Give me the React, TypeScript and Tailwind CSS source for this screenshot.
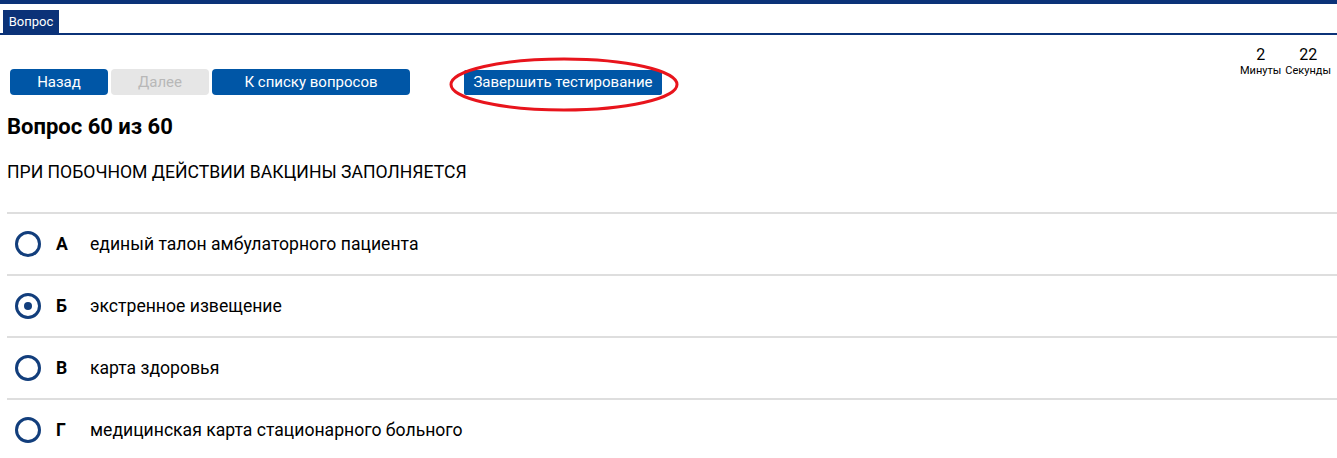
const answers = [
  { key: "А", text: "единый талон амбулаторного пациента", checked: false },
  { key: "Б", text: "экстренное извещение", checked: true },
  { key: "В", text: "карта здоровья", checked: false },
  { key: "Г", text: "медицинская карта стационарного больного", checked: false },
];

function Radio({ checked }: { checked: boolean }) {
  return (
    <span className="flex h-[26px] w-[26px] items-center justify-center rounded-full border-[3px] border-[#123e7c] bg-white">
      {checked && <span className="h-[8px] w-[8px] rounded-full bg-[#123e7c]" />}
    </span>
  );
}

export default function App() {
  return (
    <div className="min-h-[458px] bg-white text-black" style={{ fontFamily: "Roboto, 'Liberation Sans', sans-serif" }}>
      {/* top strip */}
      <div className="h-[4px] bg-[#0b3278]" />

      {/* tabs */}
      <div className="flex h-[31px] items-end border-b-2 border-[#0b3278] pl-[3px]">
        <div className="flex h-[23px] w-[56px] items-center justify-center bg-[#0b3278] text-[13px] text-white">
          Вопрос
        </div>
      </div>

      {/* nav + timer */}
      <div className="flex items-start justify-between pr-[6px]">
        <div className="flex items-center pl-[10px] pt-[34px]">
          <button className="h-[26px] w-[98px] rounded-[4px] bg-[#0056a6] text-[15px] text-white">Назад</button>
          <button className="ml-[3px] h-[26px] w-[98px] rounded-[4px] bg-[#e6e6e6] text-[15px] text-[#b8b8b8]">Далее</button>
          <button className="ml-[3px] h-[26px] w-[198px] rounded-[4px] bg-[#0056a6] text-[15px] text-white">
            К списку вопросов
          </button>
          <div className="relative ml-[54px]">
            <button className="h-[25px] w-[198px] rounded-[2px] bg-[#0056a6] text-[15px] text-white">
              Завершить тестирование
            </button>
            <svg className="absolute left-[-15px] top-[-13px]" width="230" height="55" viewBox="0 0 230 55">
              <ellipse cx="115" cy="27.5" rx="113" ry="25.5" fill="none" stroke="#e8141c" strokeWidth="3" />
            </svg>
          </div>
        </div>
        <div className="flex gap-[4px] pt-[11px] text-center">
          <div className="flex flex-col items-center">
            <span className="text-[16px] leading-[18px]">2</span>
            <span className="text-[11px] leading-[13px]">Минуты</span>
          </div>
          <div className="flex flex-col items-center">
            <span className="text-[16px] leading-[18px]">22</span>
            <span className="text-[11px] leading-[13px]">Секунды</span>
          </div>
        </div>
      </div>

      {/* question */}
      <div className="pl-[7px]">
        <h1 className="mt-[20px] text-[22px] font-bold leading-[24px]">Вопрос 60 из 60</h1>
        <p className="mt-[23px] text-[17.6px] leading-[20px]">ПРИ ПОБОЧНОМ ДЕЙСТВИИ ВАКЦИНЫ ЗАПОЛНЯЕТСЯ</p>

        <div className="mt-[30px]">
          {answers.map((a) => (
            <div key={a.key} className="flex h-[62px] items-center border-t-2 border-[#dedede] pl-[8px]">
              <Radio checked={a.checked} />
              <span className="ml-[15px] w-[34px] text-[17.6px] font-bold">{a.key}</span>
              <span className="text-[17.6px]">{a.text}</span>
            </div>
          ))}
        </div>
      </div>
    </div>
  );
}
